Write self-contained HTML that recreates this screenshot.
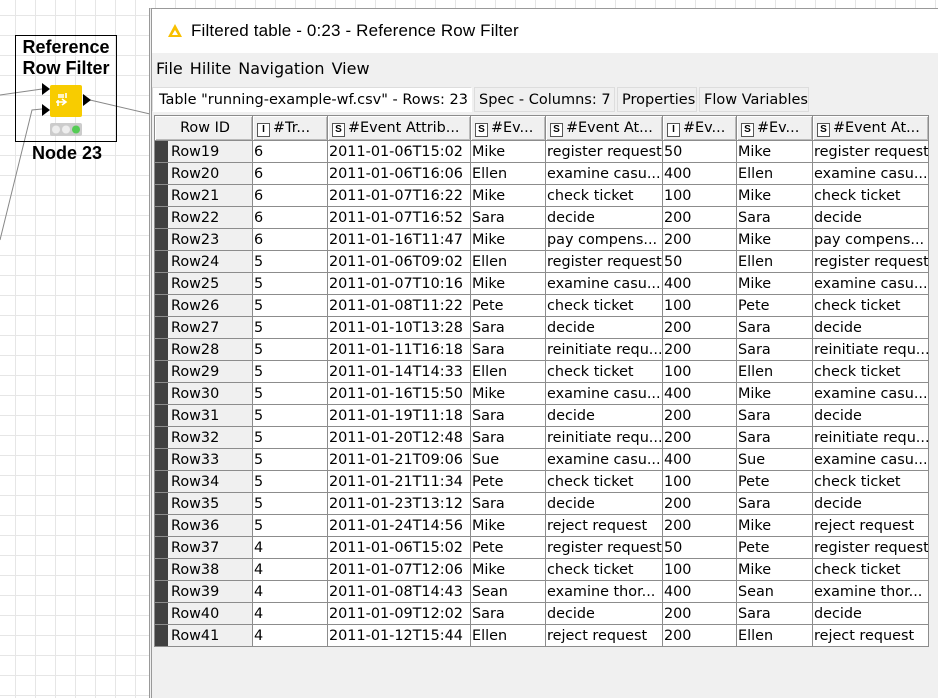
<!DOCTYPE html>
<html><head><meta charset="utf-8"><style>
*{box-sizing:border-box;margin:0;padding:0}
body{width:938px;height:694px;overflow:hidden;position:relative;font-family:"DejaVu Sans",sans-serif;
background-color:#fff;background-image:linear-gradient(#e6e6e6 1px,transparent 1px),linear-gradient(90deg,#e6e6e6 1px,transparent 1px);background-size:20px 20px;background-position:-5px -5px}
.node{position:absolute;left:15px;top:35px;width:102px;height:107px;border:1px solid #000}
.nt{position:absolute;left:0;width:100px;text-align:center;font-weight:bold;font-size:18px;line-height:21px;top:1px;font-family:"Liberation Sans",sans-serif}
.win{position:absolute;left:149px;top:8px;width:800px;height:690px;background:#f0f0f0;border-left:3px double #999;border-top:1px solid #999}
.title{position:absolute;left:0;top:0;width:800px;height:44px;background:#fff}
.menu{position:absolute;left:4px;top:50px;font-size:16px}
.menu span{margin-right:7px}
.tabs{position:absolute;left:0;top:78px;height:25px;font-size:14.5px}
.tab{position:absolute;top:0;height:25px;line-height:24px;padding:0 4px;border:1px solid #ddd;background:#f0f0f0;white-space:nowrap;overflow:hidden}
table{position:absolute;left:2px;top:106px;width:774px;border-collapse:collapse;table-layout:fixed;font-size:14.4px;background:#fff}
td,th{border:1px solid #8c8c8c;height:22px;padding:0 1px;white-space:nowrap;overflow:hidden;font-weight:normal;text-align:left;line-height:20px}
th{height:25px;background:#f0f0f0;box-shadow:inset 1px 1px #fff,inset -1px -1px #bbb;padding-left:4px}
td.r{background:#f0f0f0;padding-left:16px;position:relative}
td.r:before{content:"";position:absolute;left:0;top:0;bottom:0;width:13px;background:#404040}
.ic{display:inline-block;width:13px;height:14px;border:1px solid #555;font-size:10px;line-height:12px;text-align:center;font-weight:bold;margin-right:3px;background:#fff;font-family:"Liberation Sans",sans-serif}
</style></head><body>
<svg style="position:absolute;left:0;top:0" width="160" height="260">
<polyline points="0,95 42,89" stroke="#888" fill="none"/>
<polyline points="0,240 32,110 42,109" stroke="#888" fill="none"/>
<polyline points="90,100 150,114" stroke="#888" fill="none"/>
<polygon points="42,83 50,89 42,95" fill="#000"/>
<polygon points="42,104 50,110 42,116" fill="#000"/>
<polygon points="83,94 91,100 83,106" fill="#000"/>
<rect x="50" y="85" width="32" height="32" rx="2" fill="#f8cc00"/>
<path d="M58 95h6M58 97h6M66 93v5M56 102h10M62 99l4 3-4 3M58 100v6" stroke="#fff" stroke-width="1.6" fill="none"/>
<rect x="50" y="123" width="32" height="13" rx="2" fill="#ccc"/>
<circle cx="56" cy="129.5" r="4" fill="#eee"/><circle cx="66" cy="129.5" r="4" fill="#eee"/><circle cx="76" cy="129.5" r="4" fill="#5c5"/>
</svg>
<div class="node"><div class="nt">Reference<br>Row Filter</div></div>
<div style="position:absolute;left:32px;top:143px;font-weight:bold;font-size:18px;font-family:'Liberation Sans',sans-serif">Node 23</div>
<div class="win">
<div class="title"><svg style="position:absolute;left:15px;top:14px" width="16" height="15"><polygon points="8,1 15,14 1,14" fill="#f8c000"/><polygon points="8,7 11,12 5,12" fill="#fff"/></svg><div style="position:absolute;left:39px;top:12px;font-size:17px;letter-spacing:0.15px;font-family:'Liberation Sans',sans-serif">Filtered table - 0:23 - Reference Row Filter</div></div>
<div class="menu"><span>File</span><span>Hilite</span><span>Navigation</span><span>View</span></div>
<div class="tabs">
<div class="tab" style="left:0;width:320px;background:#fff;border-color:#ddd #fff #fff #ddd;padding-left:6px">Table "running-example-wf.csv" - Rows: 23</div>
<div class="tab" style="left:322px;width:141px">Spec - Columns: 7</div>
<div class="tab" style="left:465px;width:80px">Properties</div>
<div class="tab" style="left:547px;width:110px">Flow Variables</div>
</div>
<table>
<colgroup><col style="width:98px"><col style="width:75px"><col style="width:143px"><col style="width:75px"><col style="width:117px"><col style="width:74px"><col style="width:76px"><col style="width:116px"></colgroup>
<tr><th style="text-align:center">Row ID</th><th><span class="ic">I</span>#Tr...</th><th><span class="ic">S</span>#Event Attrib...</th><th><span class="ic">S</span>#Ev...</th><th><span class="ic">S</span>#Event At...</th><th><span class="ic">I</span>#Ev...</th><th><span class="ic">S</span>#Ev...</th><th><span class="ic">S</span>#Event At...</th></tr>
<tr><td class="r">Row19</td><td>6</td><td>2011-01-06T15:02</td><td>Mike</td><td>register request</td><td>50</td><td>Mike</td><td>register request</td></tr>
<tr><td class="r">Row20</td><td>6</td><td>2011-01-06T16:06</td><td>Ellen</td><td>examine casu...</td><td>400</td><td>Ellen</td><td>examine casu...</td></tr>
<tr><td class="r">Row21</td><td>6</td><td>2011-01-07T16:22</td><td>Mike</td><td>check ticket</td><td>100</td><td>Mike</td><td>check ticket</td></tr>
<tr><td class="r">Row22</td><td>6</td><td>2011-01-07T16:52</td><td>Sara</td><td>decide</td><td>200</td><td>Sara</td><td>decide</td></tr>
<tr><td class="r">Row23</td><td>6</td><td>2011-01-16T11:47</td><td>Mike</td><td>pay compens...</td><td>200</td><td>Mike</td><td>pay compens...</td></tr>
<tr><td class="r">Row24</td><td>5</td><td>2011-01-06T09:02</td><td>Ellen</td><td>register request</td><td>50</td><td>Ellen</td><td>register request</td></tr>
<tr><td class="r">Row25</td><td>5</td><td>2011-01-07T10:16</td><td>Mike</td><td>examine casu...</td><td>400</td><td>Mike</td><td>examine casu...</td></tr>
<tr><td class="r">Row26</td><td>5</td><td>2011-01-08T11:22</td><td>Pete</td><td>check ticket</td><td>100</td><td>Pete</td><td>check ticket</td></tr>
<tr><td class="r">Row27</td><td>5</td><td>2011-01-10T13:28</td><td>Sara</td><td>decide</td><td>200</td><td>Sara</td><td>decide</td></tr>
<tr><td class="r">Row28</td><td>5</td><td>2011-01-11T16:18</td><td>Sara</td><td>reinitiate requ...</td><td>200</td><td>Sara</td><td>reinitiate requ...</td></tr>
<tr><td class="r">Row29</td><td>5</td><td>2011-01-14T14:33</td><td>Ellen</td><td>check ticket</td><td>100</td><td>Ellen</td><td>check ticket</td></tr>
<tr><td class="r">Row30</td><td>5</td><td>2011-01-16T15:50</td><td>Mike</td><td>examine casu...</td><td>400</td><td>Mike</td><td>examine casu...</td></tr>
<tr><td class="r">Row31</td><td>5</td><td>2011-01-19T11:18</td><td>Sara</td><td>decide</td><td>200</td><td>Sara</td><td>decide</td></tr>
<tr><td class="r">Row32</td><td>5</td><td>2011-01-20T12:48</td><td>Sara</td><td>reinitiate requ...</td><td>200</td><td>Sara</td><td>reinitiate requ...</td></tr>
<tr><td class="r">Row33</td><td>5</td><td>2011-01-21T09:06</td><td>Sue</td><td>examine casu...</td><td>400</td><td>Sue</td><td>examine casu...</td></tr>
<tr><td class="r">Row34</td><td>5</td><td>2011-01-21T11:34</td><td>Pete</td><td>check ticket</td><td>100</td><td>Pete</td><td>check ticket</td></tr>
<tr><td class="r">Row35</td><td>5</td><td>2011-01-23T13:12</td><td>Sara</td><td>decide</td><td>200</td><td>Sara</td><td>decide</td></tr>
<tr><td class="r">Row36</td><td>5</td><td>2011-01-24T14:56</td><td>Mike</td><td>reject request</td><td>200</td><td>Mike</td><td>reject request</td></tr>
<tr><td class="r">Row37</td><td>4</td><td>2011-01-06T15:02</td><td>Pete</td><td>register request</td><td>50</td><td>Pete</td><td>register request</td></tr>
<tr><td class="r">Row38</td><td>4</td><td>2011-01-07T12:06</td><td>Mike</td><td>check ticket</td><td>100</td><td>Mike</td><td>check ticket</td></tr>
<tr><td class="r">Row39</td><td>4</td><td>2011-01-08T14:43</td><td>Sean</td><td>examine thor...</td><td>400</td><td>Sean</td><td>examine thor...</td></tr>
<tr><td class="r">Row40</td><td>4</td><td>2011-01-09T12:02</td><td>Sara</td><td>decide</td><td>200</td><td>Sara</td><td>decide</td></tr>
<tr><td class="r">Row41</td><td>4</td><td>2011-01-12T15:44</td><td>Ellen</td><td>reject request</td><td>200</td><td>Ellen</td><td>reject request</td></tr>
</table>
</div>
</body></html>
